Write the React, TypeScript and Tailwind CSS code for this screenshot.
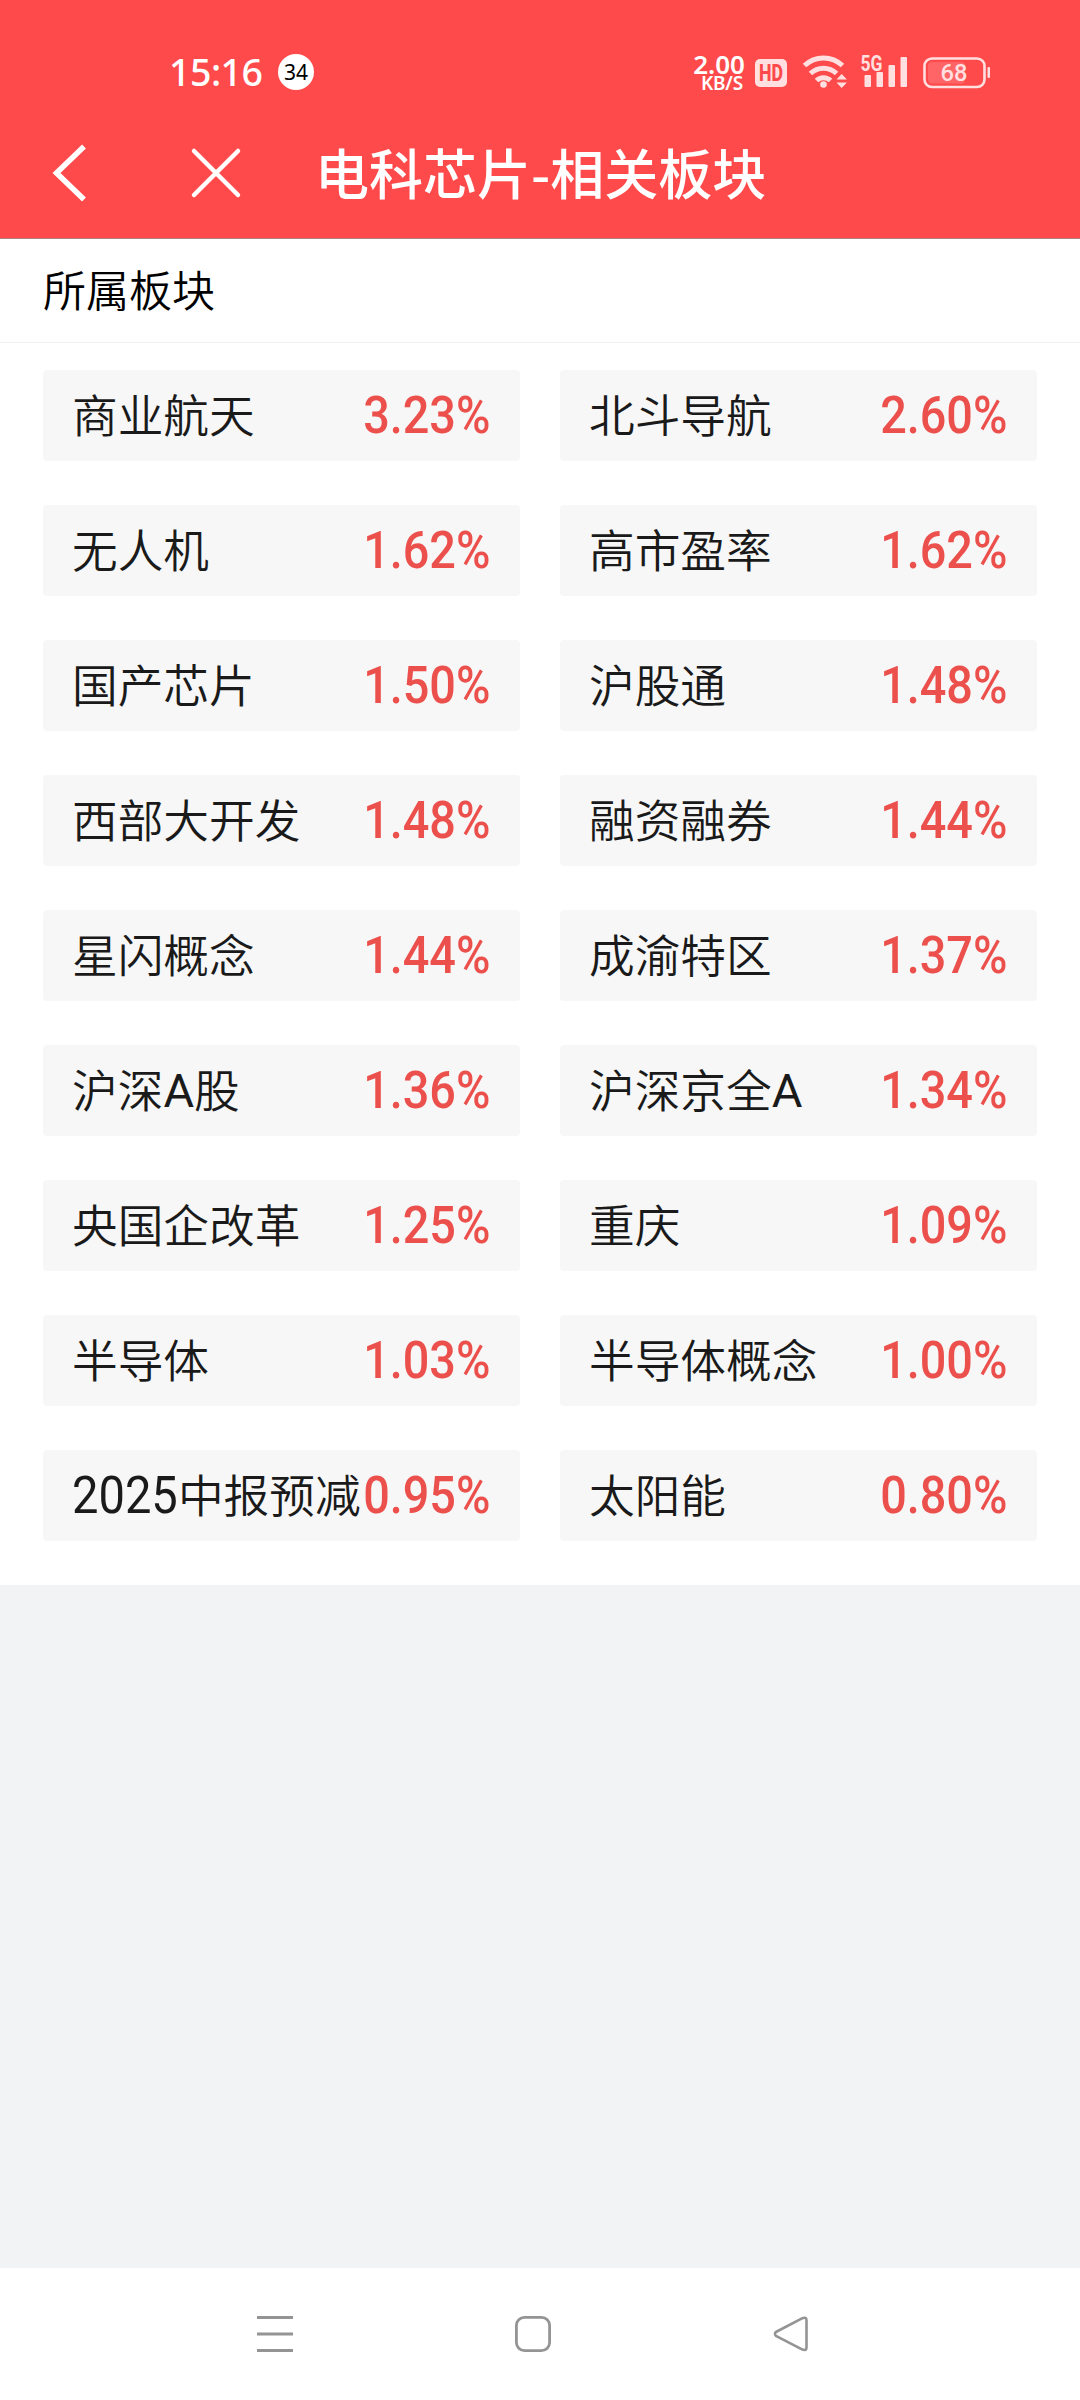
const sectors = [
  { name: "商业航天", change: "3.23%" },
  { name: "北斗导航", change: "2.60%" },
  { name: "无人机", change: "1.62%" },
  { name: "高市盈率", change: "1.62%" },
  { name: "国产芯片", change: "1.50%" },
  { name: "沪股通", change: "1.48%" },
  { name: "西部大开发", change: "1.48%" },
  { name: "融资融券", change: "1.44%" },
  { name: "星闪概念", change: "1.44%" },
  { name: "成渝特区", change: "1.37%" },
  { name: "沪深A股", change: "1.36%" },
  { name: "沪深京全A", change: "1.34%" },
  { name: "央国企改革", change: "1.25%" },
  { name: "重庆", change: "1.09%" },
  { name: "半导体", change: "1.03%" },
  { name: "半导体概念", change: "1.00%" },
  { name: "2025中报预减", change: "0.95%" },
  { name: "太阳能", change: "0.80%" },
];

function StatusBar() {
  return (
    <div className="flex h-[108px] items-center justify-between pl-[169px] pr-[89px] pt-[36px] font-['Noto_Sans',sans-serif] text-white">
      <div className="flex items-center">
        <span className="w-[109px] text-[37.5px] leading-none font-medium tracking-[-0.5px]">15:16</span>
        <span className="flex h-9 w-9 items-center justify-center rounded-full bg-white text-[21px] leading-none text-black">
          34
        </span>
      </div>

      <div className="flex items-center">
        <div className="flex w-[52px] flex-col items-end pt-[2px] font-semibold">
          <span className="text-[26px] leading-[20px]">2.00</span>
          <span className="pr-[2px] text-[19px] leading-[19px] tracking-[-0.2px]">KB/S</span>
        </div>

        <svg width="246" height="44" viewBox="745 50 246 44" className="text-[#ffdfdf]" fill="currentColor">
          {/* HD */}
          <rect x="755" y="59" width="32" height="28" rx="5" />
          <text x="771" y="81" textAnchor="middle" fontFamily="Roboto" fontWeight="800" fontSize="23" textLength="24" lengthAdjust="spacingAndGlyphs" fill="#ff4a4b">HD</text>

          {/* Wifi */}
          <g fill="none" stroke="currentColor" strokeWidth="5">
            <path d="M804.5 65.5a27.5 27.5 0 0 1 38 0" />
            <path d="M810.500 73.500a18.500 18.500 0 0 1 26 0" />
            <path d="M816.500 80.500a10 10 0 0 1 14 0" />
          </g>
          <circle cx="823.5" cy="84.500" r="3.3" />
          <path d="M836.500 79.500l5.200-5.500 5.200 5.500zM836.500 82.500h10.400l-5.200 5.500z" />

          {/* Signal */}
          <text x="860.5" y="71" fontFamily="Roboto" fontWeight="700" fontSize="22" textLength="22" lengthAdjust="spacingAndGlyphs">5G</text>
          <rect x="864.5" y="75" width="6.500" height="12" rx="1" />
          <rect x="876.5" y="72" width="6.500" height="15" rx="1" />
          <rect x="888.5" y="65" width="6.500" height="22" rx="1" />
          <rect x="900.5" y="57" width="6.500" height="30" rx="1" />

          {/* Battery */}
          <rect x="924.5" y="58.500" width="60" height="28.500" rx="7.500" fill="none" stroke="currentColor" strokeWidth="2.600" />
          <rect x="928" y="62" width="37" height="21.500" rx="4" fill="#ff6566" />
          <rect x="987.500" y="67" width="2.500" height="11" rx="1" />
          <text x="954" y="81" textAnchor="middle" fontFamily="Roboto" fontWeight="500" fontSize="24.500" textLength="27" lengthAdjust="spacingAndGlyphs">68</text>
        </svg>
      </div>
    </div>
  );
}

function TitleBar() {
  return (
    <div className="flex h-[130px] items-center pl-[50px] text-white">
      <svg width="40" height="60" viewBox="50 143 40 60" fill="none" stroke="currentColor" strokeWidth="5.5">
        <path d="M84 146.500 56.500 173 84 199.500" />
      </svg>
      <svg width="52" height="52" viewBox="190 147 52 52" fill="none" stroke="currentColor" strokeWidth="4.5" strokeLinecap="round" className="ml-[100px]">
        <path d="M194 151 238 195M238 151 194 195" />
      </svg>
      <h1 className="ml-[73px] pb-[2px] text-[54px] leading-none font-medium">电科芯片-相关板块</h1>
    </div>
  );
}

function SectorName({ name }: { name: string }) {
  // digits and latin letters use the narrower figure style
  return (
    <span className="flex items-center text-[45.7px] leading-none font-[350] whitespace-nowrap text-[#1a1a1a]">
      {name.split(/([A-Za-z0-9]+)/).filter(Boolean).map((part) => {
        if (/\d/.test(part)) {
          return (
            <span key={part} className="mr-[-11px] inline-block origin-left scale-x-[0.905] font-[Roboto] text-[52px] font-normal">
              {part}
            </span>
          );
        }
        if (/[A-Z]/.test(part)) {
          return (
            <span key={part} className="font-[Roboto] text-[47px] font-normal">
              {part}
            </span>
          );
        }
        return (
          <span key={part} className="pb-[4px]">
            {part}
          </span>
        );
      })}
    </span>
  );
}

export default function App() {
  return (
    <div className="flex h-[2400px] w-[1080px] flex-col overflow-hidden bg-[#f2f3f5] font-['Noto_Sans_CJK_SC',sans-serif]">
      <header className="border-b border-[#b08080] bg-[#ff4a4b]">
        <StatusBar />
        <TitleBar />
      </header>

      <main className="bg-white pb-[44px]">
        <h2 className="flex h-[104px] items-center border-b border-[#f0f0f0] px-[43px] pb-[4px] text-[43px] leading-none font-[350] text-black">
          所属板块
        </h2>

        <div className="grid grid-cols-2 gap-x-10 gap-y-[44px] px-[43px] pt-[27px]">
          {sectors.map((sector) => (
            <div key={sector.name} className="flex h-[91px] items-center justify-between rounded-[4px] bg-[#f7f7f7] pr-[30px] pl-[29px]">
              <SectorName name={sector.name} />
              <span className="-ml-10 origin-right scale-x-[0.9] font-[Roboto] text-[52px] leading-none font-medium text-[#ec504c]">
                {sector.change}
              </span>
            </div>
          ))}
        </div>
      </main>

      <nav className="mt-auto flex h-[132px] items-center justify-between bg-white pl-[257px] pr-[271px] text-[#949494]">
        <svg width="36" height="36" fill="currentColor">
          <path d="M0 0h36v3H0zM0 16.500h36v3H0zM0 33h36v3H0z" />
        </svg>
        <svg width="36" height="36" fill="none" stroke="currentColor" strokeWidth="2.800">
          <rect x="1.400" y="1.400" width="33.200" height="33.200" rx="8" />
        </svg>
        <svg width="36" height="36" fill="none" stroke="currentColor" strokeWidth="2.600" strokeLinejoin="round">
          <path d="M29.500 2.200 2.900 16Q1 17.800 2.900 19.800L29.500 33.600Q33.500 35 33.500 31.500V4.300Q33.500 .8 29.500 2.200Z" />
        </svg>
      </nav>
    </div>
  );
}
